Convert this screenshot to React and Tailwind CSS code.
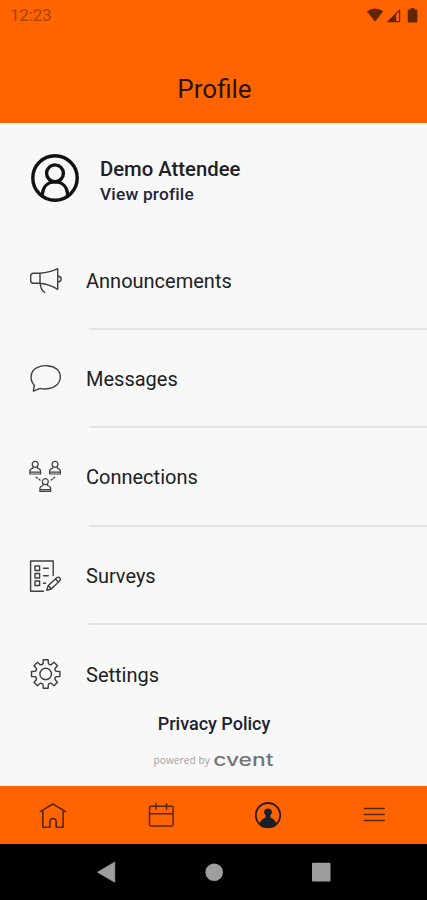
const gear = Array.from({ length: 8 }, (_, i) => {
  const base = (i * Math.PI) / 4 - Math.PI / 2;
  const pt = (r, a) =>
    `${(17.7 + r * Math.cos(base + a)).toFixed(2)} ${(18 + r * Math.sin(base + a)).toFixed(2)}`;
  return `${i ? "L" : "M"}${pt(11, -0.24)} L${pt(14.4, -0.17)} L${pt(14.4, 0.17)} L${pt(11, 0.24)} Q${pt(9.4, 0.39)} ${pt(11, 0.545)}`;
}).join(" ") + "Z";

function Icon({ children }) {
  return (
    <svg viewBox="0 0 36 36" className="h-9 w-9 shrink-0" fill="none" stroke="#3c3e42" strokeWidth="1.4" strokeLinejoin="round" strokeLinecap="round">
      {children}
    </svg>
  );
}

function Person({ x, y }) {
  return (
    <g transform={`translate(${x} ${y})`} strokeWidth="1.2">
      <circle r="3" />
      <path d="M-2.2 2.2V3.8Q-5.4 4.8-5.4 7V9.7H5.4V7Q5.4 4.8 2.2 3.8V2.2M-5.4 7.9H5.4" />
    </g>
  );
}

const items = [
  {
    label: "Announcements",
    icon: (
      <Icon>
        <path d="M12 10.3H5.5Q2.7 10.3 2.7 13V17.5Q2.7 20.3 5.5 20.3H12ZM12 10.3Q22 9.5 29.7 5.7V26.3Q22 21.5 12 20.3" />
        <path d="M30 13.2Q33.2 13.5 33.2 16T30 19M12.3 20.5Q12.2 26.5 16.7 29.3" />
      </Icon>
    ),
  },
  {
    label: "Messages",
    icon: (
      <Icon>
        <path d="M6.3 24.3C1 18.7 2.5 9.5 9 6.6C15 3.5 24 4.2 28.7 8C33.3 11.8 33.5 19.3 29 23.7C25 27.7 17.5 28.7 12.2 27.4L5.4 30.2Z" />
      </Icon>
    ),
  },
  {
    label: "Connections",
    icon: (
      <Icon>
        <Person x={7.2} y={5.3} />
        <Person x={27} y={5.3} />
        <Person x={17.3} y={22.7} />
        <path d="M8.3 18.2L9.3 19M11 20.2L12 21M26.7 18.2L25.7 19M24.2 20.2L23.2 21" />
      </Icon>
    ),
  },
  {
    label: "Surveys",
    icon: (
      <Icon>
        <path d="M15.5 33.2H2.6V3H25.2V17.5M15.5 10.3H20.3M15.5 17.7H20.3M15.5 25.3H17.5" />
        <path d="M7 8H11.6V12.5H7ZM7 15.5H11.6V20H7ZM7 23H11.6V27.5H7Z" />
        <path d="M18.7 32.3L20.3 27.5L29 19.5Q30.5 18.5 31.9 20Q33 21.5 31.8 22.7L23.3 31ZM20.3 27.5L23.3 31M27.5 21L30.3 24" />
      </Icon>
    ),
  },
  {
    label: "Settings",
    icon: (
      <Icon>
        <path d={gear} />
        <circle cx="17.7" cy="18" r="5.8" />
      </Icon>
    ),
  },
];

export default function App() {
  return (
    <div className="flex h-[900px] w-[427px] flex-col overflow-hidden bg-[#f8f8f8] font-['Roboto',sans-serif] text-[#202124]">
      <header className="flex h-[123px] shrink-0 flex-col bg-[#ff6400]">
        <div className="flex h-[31px] items-center justify-between pl-[10px] pr-[8px] text-[#a84200]">
          <span className="text-[17px] leading-none tracking-[-0.2px]">12:23</span>
          <svg viewBox="0 0 54 18" className="h-[18px] w-[54px]" fill="#632600">
            <path d="M1.8 4.3Q10-1.5 18.2 4.3L10 14.8Z" />
            <path d="M21.5 15.3L35.2 1.8V15.3ZM31.2 7.5V14H34V4.7Z" fillRule="evenodd" />
            <path d="M45.8 1H49.3V2.5H51.8Q52.4 2.5 52.4 3.2V14.6Q52.4 15.4 51.6 15.4H43.5Q42.7 15.4 42.7 14.6V3.2Q42.7 2.5 43.4 2.5H45.8Z" />
          </svg>
        </div>
        <h1 className="mt-[43px] pl-[2px] text-center text-[26px] font-normal leading-[30px] text-[#28150e]">Profile</h1>
      </header>

      <main className="flex min-h-0 flex-1 flex-col">
        <section className="flex h-[109px] shrink-0 items-center pl-[30px]">
          <svg viewBox="0 0 50 50" className="h-[50px] w-[50px]" fill="none" stroke="#111" strokeWidth="3.4">
            <circle cx="25" cy="25" r="22.2" />
            <circle cx="25" cy="20.3" r="8.4" />
            <path d="M12.3 43C12.5 34 17.5 28.9 25 28.9S37.5 34 37.7 43" />
          </svg>
          <div className="ml-5 mt-[8px]">
            <div className="text-[20.3px] font-medium leading-[25px]">Demo Attendee</div>
            <div className="text-[17.3px] font-medium leading-[25px] tracking-[0.2px] text-[#23253a]">View profile</div>
          </div>
        </section>

        <nav className="-mt-[0.25px] shrink-0">
          {items.map(({ label, icon }, i) => (
            <div key={label} className="flex h-[98.25px] items-stretch pl-7 last:h-[85px]">
              <div className="flex h-[98.25px] items-center">{icon}</div>
              <div className={`ml-[25px] flex flex-1 flex-col ${i === 4 ? "h-[98.25px]" : ""}`}>
                <div className="-ml-[3px] flex flex-1 items-center pt-[2px] text-[20px]">{label}</div>
                {i < 4 && <div className="h-[2px] bg-[#e3e4e5]" />}
              </div>
            </div>
          ))}
        </nav>

        <footer className="flex flex-col items-center">
          <div className="pl-px text-[18px] font-medium leading-[28px] text-[#1c2233]">Privacy Policy</div>
          <div className="mt-[10px] flex h-6 w-[120px] items-center justify-between">
            <span className="font-['Open_Sans',sans-serif] text-[10px] leading-none tracking-[0.14px] text-[#a0a0a0]">powered by</span>
            <span className="flex w-[59px] justify-end"><span className="origin-right scale-x-[1.27] font-['Inter',sans-serif] text-[18px] font-medium leading-none text-[#75767a]">cvent</span></span>
          </div>
        </footer>
      </main>

      <div className="flex h-[58px] shrink-0 items-center bg-[#ff6400] pt-px">
        <div className="flex flex-1 justify-center">
          <svg viewBox="0 0 30 30" className="h-[30px] w-[30px]" fill="none" stroke="#55280c" strokeWidth="1.6" strokeLinejoin="round" strokeLinecap="round">
            <path d="M2.2 10.6L14.9 3L27.7 10.6M4.8 9.8V26.3H11.8V21Q12 17.5 15 17.5T18.2 21V26.3H25.1V9.8" />
          </svg>
        </div>
        <div className="flex flex-1 justify-center pl-[2px]">
          <svg viewBox="0 0 30 30" className="h-[30px] w-[30px]" fill="none" stroke="#55280c" strokeWidth="1.5" strokeLinecap="round">
            <rect x="3.5" y="5.3" width="23.6" height="19.8" rx="1.3" />
            <path d="M3.5 12.7H27.1M9.9 2.5V8.2M20.5 2.5V8.2" />
          </svg>
        </div>
        <div className="flex flex-1 justify-center pl-px">
          <svg viewBox="0 0 30 30" className="h-[30px] w-[30px]" fill="none" stroke="#251b18" strokeWidth="1.8">
            <circle cx="15" cy="14.2" r="12.2" />
            <path fill="#17202b" stroke="none" d="M6.5 22.5Q8.2 18.3 12.6 16.5V14.3Q11 12.8 11 11.2Q11.3 7.6 15 7.6T19 11.2Q19 12.8 17.4 14.3V16.5Q21.8 18.3 23.5 22.5Q20.5 26 15 26T6.5 22.5Z" />
          </svg>
        </div>
        <div className="flex flex-1 justify-center">
          <svg viewBox="0 0 30 30" className="h-[30px] w-[30px]" stroke="#55280c" strokeWidth="1.6" strokeLinecap="round">
            <path d="M5.3 7.5H25.2M5.3 13.5H25.2M5.3 19.5H25.2" />
          </svg>
        </div>
      </div>

      <div className="flex h-14 shrink-0 items-center justify-center bg-black">
        <svg viewBox="0 0 240 24" className="h-6 w-[240px]" fill="#9e9e9e">
          <path d="M3.5 12.2L20.8 2V22.3Z" stroke="#9e9e9e" strokeWidth=".7" strokeLinejoin="round" />
          <circle cx="120.2" cy="12.3" r="8.8" />
          <rect x="218" y="2.7" width="18.5" height="18.8" rx="1" />
        </svg>
      </div>
    </div>
  );
}
